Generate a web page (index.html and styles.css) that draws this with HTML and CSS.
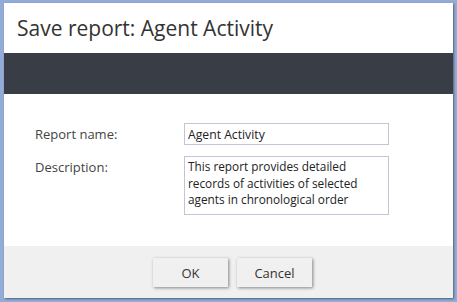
FILE: index.html
```html
<!DOCTYPE html>
<html lang="en">
<head>
  <meta charset="UTF-8">
  <title>Save report</title>
  <link rel="stylesheet" href="styles.css">
</head>
<body>
  <div class="dialog">
    <div class="dialog-title">Save report: Agent Activity</div>
    <div class="dialog-band"></div>
    <form class="dialog-body">
      <div class="row">
        <label for="reportName">Report name:</label>
        <input type="text" id="reportName" value="Agent Activity">
      </div>
      <div class="row">
        <label for="reportDesc">Description:</label>
        <textarea id="reportDesc">This report provides detailed records of activities of selected agents in chronological order</textarea>
      </div>
    </form>
    <div class="dialog-footer">
      <button type="button">OK</button>
      <button type="button">Cancel</button>
    </div>
  </div>
</body>
</html>
```

FILE: styles.css
```css
body {
  margin: 0;
  padding: 3px 0 0 4px;
  background-color: #93acd6;
  font-family: "Open Sans", sans-serif;
  height: 302px;
  box-sizing: border-box;
  overflow: hidden;
}

.dialog {
  width: 449px;
  height: 295px;
  background-color: #fff;
  display: flex;
  flex-direction: column;
  box-shadow: 1px 1px 2px rgba(0, 0, 0, 0.45);
}

.dialog-title {
  height: 50px;
  padding-left: 13px;
  display: flex;
  align-items: center;
  font-size: 21px;
  color: #333;
}

.dialog-band {
  height: 41px;
  background-color: #393d45;
}

.dialog-body {
  flex: 1;
  padding: 29px 0 0 31px;
  margin: 0;
}

.row {
  display: flex;
  align-items: flex-start;
  margin-bottom: 11px;
}

.row label {
  width: 149px;
  font-size: 13px;
  color: #444;
  line-height: 22px;
}

.row input,
.row textarea {
  width: 205px;
  box-sizing: border-box;
  border: 1px solid #c4c4d6;
  font-family: "Open Sans", sans-serif;
  font-size: 12.2px;
  color: #222;
  padding: 0 3px;
  margin: 0;
  outline: none;
}

.row input {
  height: 22px;
}

.row textarea {
  height: 59px;
  font-size: 11.8px;
  line-height: 16.5px;
  padding-top: 1px;
  resize: none;
  overflow: hidden;
}

.dialog-footer {
  height: 52px;
  background-color: #f0f0f0;
  display: flex;
  justify-content: center;
  align-items: flex-start;
  gap: 9px;
  padding: 12px 0 0 8px;
  box-sizing: border-box;
}

.dialog-footer button {
  width: 75px;
  height: 29px;
  background-color: #f0f0f0;
  border: none;
  box-shadow: 1px 1px 3px rgba(0, 0, 0, 0.45);
  font-family: "Open Sans", sans-serif;
  font-size: 13px;
  color: #333;
  cursor: pointer;
}
```
